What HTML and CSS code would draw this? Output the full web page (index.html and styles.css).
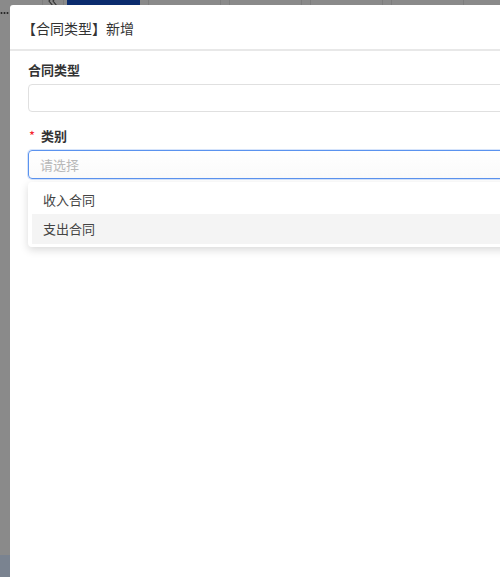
FILE: index.html
```html
<!DOCTYPE html>
<html lang="zh-CN">
<head>
    <meta charset="UTF-8">
    <meta name="viewport" content="width=device-width, initial-scale=1.0">
    <title>合同类型</title>
    <link rel="stylesheet" href="styles.css">
</head>
<body>

    <div class="backdrop">
        <div class="tabBar">
            <span class="dots">
                <svg width="10" height="20" viewBox="0 0 10 20"><circle cx="1.5" cy="13" r="1" fill="#222"/><circle cx="4.5" cy="13" r="1" fill="#222"/><circle cx="7.5" cy="13" r="1" fill="#222"/></svg>
            </span>
            <span class="tabArrow">
                <svg width="12" height="12" viewBox="0 0 12 12"><path d="M6 1 L2 6 L6 11 M10 1 L6 6 L10 11" fill="none" stroke="#333" stroke-width="1.2"/></svg>
            </span>
            <span class="tab tabActive"></span>
            <span class="tab"></span>
            <span class="tab"></span>
            <span class="tab"></span>
            <span class="tab"></span>
        </div>
        <div class="sideBottom"></div>
    </div>

    <div class="modal">
        <div class="modalHeader">【合同类型】新增</div>
        <div class="modalBody">
            <div class="formItem">
                <div class="formLabel">合同类型</div>
                <div class="input"></div>
            </div>
            <div class="formItem">
                <div class="formLabel"><span class="required">*</span>类别</div>
                <div class="input inputFocus">
                    <span class="placeholder">请选择</span>
                </div>
                <div class="dropdown">
                    <div class="option">收入合同</div>
                    <div class="option optionHover">支出合同</div>
                </div>
            </div>
        </div>
    </div>

</body>
</html>
```

FILE: styles.css
```css
body {
    margin: 0;
    padding: 0;
    width: 500px;
    height: 577px;
    overflow: hidden;
    background-color: #8a8a8a;
    font-family: "Noto Sans CJK SC", "Noto Sans", sans-serif;
    color: #333;
}

.backdrop {
    height: 100%;
    display: flex;
    flex-direction: column;
    justify-content: space-between;
}

.tabBar {
    display: flex;
    align-items: flex-start;
    height: 30px;
}

.dots {
    width: 42px;
    height: 20px;
}

.tabArrow {
    width: 20px;
    height: 30px;
    border-left: 1px solid #7e7e7e;
    border-right: 1px solid #7e7e7e;
    display: flex;
    justify-content: center;
    margin-right: 3px;
}

.tabArrow svg {
    margin-top: -5px;
}

.tab {
    width: 73px;
    height: 30px;
    margin-right: 8px;
    border-left: 1px solid #7e7e7e;
    border-right: 1px solid #7e7e7e;
    box-sizing: border-box;
}

.tabActive {
    background-color: #0b2c6e;
    border: none;
}

.sideBottom {
    width: 10px;
    height: 22px;
    background-color: #7a8390;
}

.modal {
    position: fixed;
    top: 5px;
    left: 10px;
    width: 620px;
    height: 620px;
    background-color: #fff;
    border-radius: 3px 0 0 0;
}

.modalHeader {
    height: 44px;
    line-height: 46px;
    padding-left: 12px;
    font-size: 14px;
    color: #333;
    border-bottom: 2px solid #e8e8e8;
}

.modalBody {
    padding: 9px 0 0 18px;
}

.formItem {
    margin-bottom: 14px;
}

.formLabel {
    font-size: 13px;
    font-weight: bold;
    line-height: 20px;
    margin-bottom: 4px;
    color: #333;
}

.required {
    color: #f5222d;
    font-weight: normal;
    margin: 0 6px 0 1px;
}

.input {
    height: 26px;
    border: 1px solid #e0e0e0;
    border-radius: 4px;
    display: flex;
    align-items: center;
    padding-left: 11px;
}

.inputFocus {
    height: 27px;
    border-color: #5b93ef;
    box-shadow: 0 0 0 1px rgba(91, 147, 239, 0.25);
    background: linear-gradient(#fff, #fafafa);
}

.placeholder {
    font-size: 13px;
    color: #b8b8b8;
}

.dropdown {
    margin-top: 3px;
    padding: 3px 0 3px 4px;
    background-color: #fff;
    border-radius: 4px;
    box-shadow: 0 3px 8px rgba(0, 0, 0, 0.15);
}

.option {
    height: 29px;
    line-height: 29px;
    padding-left: 11px;
    font-size: 13px;
    color: #444;
}

.optionHover {
    height: 30px;
    line-height: 30px;
    background-color: #f4f4f4;
}
```
